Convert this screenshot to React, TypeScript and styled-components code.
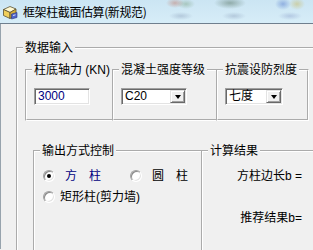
import styled, { createGlobalStyle } from "styled-components";

const GlobalStyle = createGlobalStyle`
  html, body {
    margin: 0;
    padding: 0;
    background: #f0f0f0;
  }
  body {
    font-family: "Liberation Sans", "Noto Sans CJK SC", sans-serif;
    font-size: 12px;
    color: #000;
  }
`;

const Window = styled.div`
  width: 313px;
  height: 250px;
  overflow: hidden;
  background: #f0f0f0;
`;

const TitleBar = styled.div`
  height: 24px;
  box-sizing: border-box;
  border-bottom: 1px solid #6f7f8e;
  display: flex;
  align-items: center;
  gap: 5px;
  padding: 1px 0 0 2px;
  background:
    radial-gradient(9px 5px at 175px 3px, rgba(190, 110, 90, 0.45), transparent),
    radial-gradient(9px 5px at 186px 4px, rgba(110, 150, 110, 0.4), transparent),
    radial-gradient(12px 4px at 181px 16px, rgba(120, 140, 170, 0.35), transparent),
    radial-gradient(16px 6px at 230px 3px, rgba(70, 100, 80, 0.45), transparent),
    radial-gradient(12px 4px at 234px 16px, rgba(120, 140, 170, 0.35), transparent),
    radial-gradient(8px 6px at 283px 4px, rgba(70, 110, 200, 0.45), transparent),
    radial-gradient(8px 6px at 297px 4px, rgba(200, 180, 80, 0.45), transparent),
    radial-gradient(12px 4px at 290px 16px, rgba(120, 140, 190, 0.35), transparent),
    linear-gradient(#cbe5f3, #d7edf8);
`;

const TitleText = styled.span`
  font-family: "Noto Sans CJK SC", sans-serif;
  font-size: 12px;
  letter-spacing: -0.4px;
  line-height: 16px;
`;

const Client = styled.div`
  height: 225px;
  box-sizing: border-box;
  border-left: 1px solid #97a3ad;
  padding: 17px 0 0 15px;
`;

const GroupBox = styled.fieldset<{ $width: number; $overlap?: boolean; $padBottom?: number }>`
  margin: 0 0 0 ${(p) => (p.$overlap ? -2 : 0)}px;
  width: ${(p) => p.$width}px;
  min-width: 0;
  box-sizing: border-box;
  flex: none;
  border: 2px groove #fff;
  padding: 0 0 ${(p) => p.$padBottom ?? 0}px 0;
`;

const Legend = styled.legend`
  margin-left: 5px;
  padding: 0 2px;
  line-height: 14px;
  font-size: 12px;
`;

const Row = styled.div<{ $top: number; $left: number }>`
  display: flex;
  margin: ${(p) => p.$top}px 0 0 ${(p) => p.$left}px;
`;

const Field = styled.div<{ $width: number; $color?: string }>`
  width: ${(p) => p.$width}px;
  height: 17px;
  box-sizing: border-box;
  margin: 11px 0 0 7px;
  display: flex;
  align-items: center;
  background: #fff;
  border: 1px solid;
  border-color: #a0a0a0 #fff #fff #a0a0a0;
  box-shadow: inset 1px 1px #696969, inset -1px -1px #e3e3e3;
  padding: 1px 1px 1px 3px;
  color: ${(p) => p.$color ?? "#000"};
`;

const FieldText = styled.span`
  flex: 1;
  font-size: 12px;
  line-height: 13px;
`;

const DropButton = styled.span`
  width: 15px;
  height: 13px;
  box-sizing: border-box;
  background: #f0f0f0;
  border: 1px solid;
  border-color: #e3e3e3 #696969 #696969 #e3e3e3;
  box-shadow: inset 1px 1px #fff, inset -1px -1px #a0a0a0;
  display: flex;
  align-items: center;
  justify-content: center;
`;

const Arrow = styled.span`
  width: 0;
  height: 0;
  border-left: 3.5px solid transparent;
  border-right: 3.5px solid transparent;
  border-top: 4px solid #000;
`;

const OptionRow = styled.div<{ $top: number }>`
  display: flex;
  align-items: center;
  height: 20px;
  margin: ${(p) => p.$top}px 0 0 8px;
`;

const Option = styled.label<{ $width?: number }>`
  display: flex;
  align-items: center;
  gap: 5px;
  width: ${(p) => (p.$width ? `${p.$width}px` : "auto")};
`;

const Radio = styled.span<{ $checked?: boolean }>`
  position: relative;
  width: 12px;
  height: 12px;
  box-sizing: border-box;
  border-radius: 50%;
  background: #fff;
  border: 1px solid;
  border-color: #a0a0a0 #fff #fff #a0a0a0;
  box-shadow: inset 1px 1px #8a8a8a, inset -1px -1px #e3e3e3;
  &::after {
    content: "";
    display: ${(p) => (p.$checked ? "block" : "none")};
    position: absolute;
    left: 3px;
    top: 3px;
    width: 4px;
    height: 4px;
    border-radius: 50%;
    background: #000;
  }
`;

const OptionText = styled.span<{ $color?: string; $indent?: number }>`
  white-space: pre;
  color: ${(p) => p.$color ?? "#000"};
  padding-left: ${(p) => p.$indent ?? 0}px;
  line-height: 14px;
`;

const Results = styled.div`
  width: 99px;
  margin-top: 10px;
  display: flex;
  flex-direction: column;
  gap: 26px;
  text-align: right;
`;

const ResultLabel = styled.div`
  line-height: 16px;
  white-space: pre;
`;

function AppIcon() {
  return (
    <svg width="16" height="16" viewBox="0 0 16 16">
      <path d="M1.5 5.5 L8 2.5 L14 5 L8 8.5 Z" fill="#fff8d0" stroke="#5a5030" strokeWidth="0.8" />
      <path d="M1.5 5.5 L8 8.5 L8 14.5 L1.5 11.5 Z" fill="#f0cf5a" stroke="#5a5030" strokeWidth="0.8" />
      <path d="M8 8.5 L14 5 L14 11 L8 14.5 Z" fill="#d9b03a" stroke="#5a5030" strokeWidth="0.8" />
      <path d="M9.5 10 L15 8.5 L15 13.5 L9.5 15 Z" fill="#4f63c8" stroke="#2a3580" strokeWidth="0.6" />
      <path d="M11 11.5 L13.5 10.8" stroke="#fff" strokeWidth="0.8" />
    </svg>
  );
}

function Combo({ width, value }: { width: number; value: string }) {
  return (
    <Field $width={width}>
      <FieldText>{value}</FieldText>
      <DropButton>
        <Arrow />
      </DropButton>
    </Field>
  );
}

export default function App() {
  return (
    <Window>
      <GlobalStyle />
      <TitleBar>
        <AppIcon />
        <TitleText>框架柱截面估算(新规范)</TitleText>
      </TitleBar>
      <Client>
        <GroupBox $width={330} style={{ height: 240 }}>
          <Legend>数据输入</Legend>
          <Row $top={8} $left={7}>
            <GroupBox $width={89} $padBottom={14}>
              <Legend>柱底轴力 (KN)</Legend>
              <Field $width={56} $color="#000080">
                <FieldText>3000</FieldText>
              </Field>
            </GroupBox>
            <GroupBox $width={106} $overlap $padBottom={14}>
              <Legend>混凝土强度等级</Legend>
              <Combo width={66} value="C20" />
            </GroupBox>
            <GroupBox $width={93} $overlap $padBottom={14}>
              <Legend>抗震设防烈度</Legend>
              <Combo width={58} value="七度" />
            </GroupBox>
          </Row>
          <Row $top={23} $left={15}>
            <GroupBox $width={170} style={{ height: 120 }}>
              <Legend>输出方式控制</Legend>
              <OptionRow $top={8}>
                <Option $width={87}>
                  <Radio $checked />
                  <OptionText $color="#000080" $indent={5}>方　柱</OptionText>
                </Option>
                <Option>
                  <Radio />
                  <OptionText $indent={5}>圆　柱</OptionText>
                </Option>
              </OptionRow>
              <OptionRow $top={1}>
                <Option>
                  <Radio />
                  <OptionText>矩形柱(剪力墙)</OptionText>
                </Option>
              </OptionRow>
            </GroupBox>
            <GroupBox $width={150} $overlap style={{ height: 120 }}>
              <Legend>计算结果</Legend>
              <Results>
                <ResultLabel>方柱边长b =</ResultLabel>
                <ResultLabel>推荐结果b=</ResultLabel>
              </Results>
            </GroupBox>
          </Row>
        </GroupBox>
      </Client>
    </Window>
  );
}
